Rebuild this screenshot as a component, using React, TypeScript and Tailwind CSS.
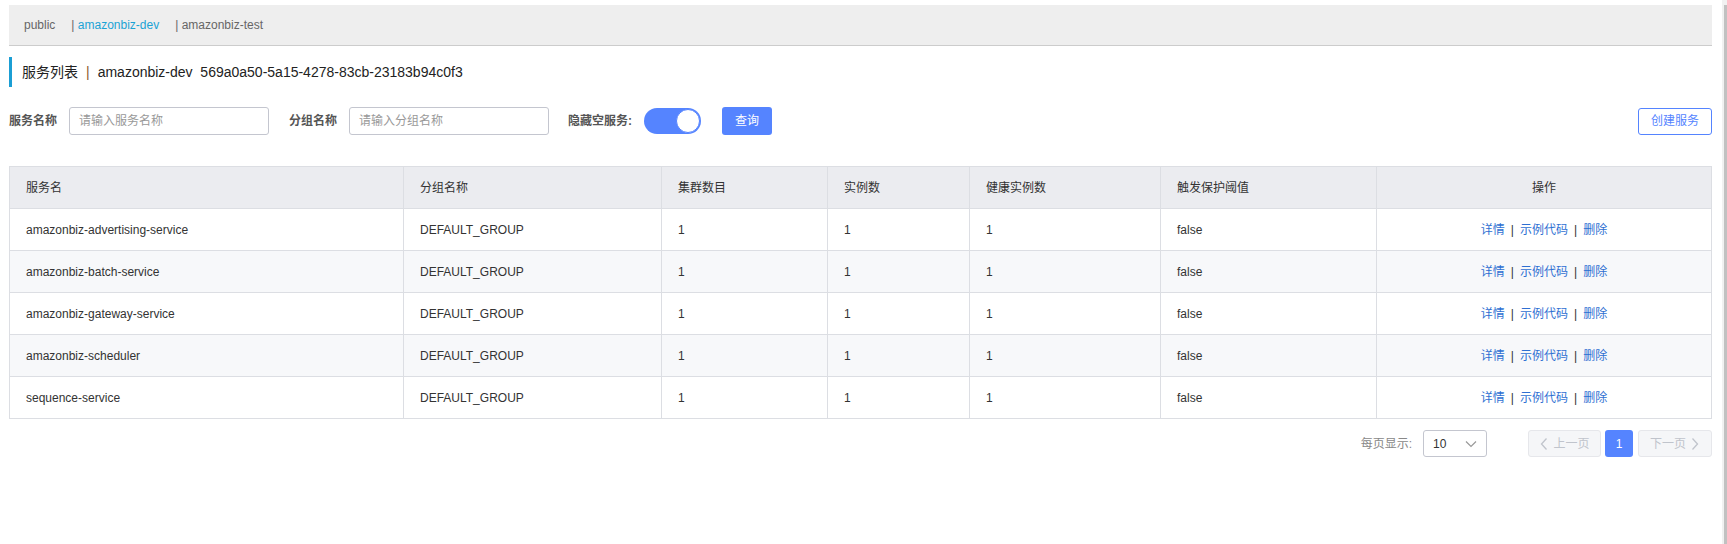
import { JSX } from 'react';

const rows = [
	'amazonbiz-advertising-service',
	'amazonbiz-batch-service',
	'amazonbiz-gateway-service',
	'amazonbiz-scheduler',
	'sequence-service',
];

const cols = [
	{ label: '服务名', w: 'w-[394px]' },
	{ label: '分组名称', w: 'w-[258px]' },
	{ label: '集群数目', w: 'w-[166px]' },
	{ label: '实例数', w: 'w-[142px]' },
	{ label: '健康实例数', w: 'w-[191px]' },
	{ label: '触发保护阈值', w: 'w-[216px]' },
];

const App = (): JSX.Element => {
	return (
		<div className="flex min-h-[544px] bg-white font-['Liberation_Sans','Noto_Sans_CJK_SC',sans-serif] text-[12px] text-[#333]">
			<div className="flex-1 pl-[9px] pr-[10px] pt-[5px]">
				{/* namespace tabs */}
				<div className="flex h-[41px] items-center border-b border-[#cccccc] bg-[#eeeeee] pl-[15px] text-[12px] text-[#666]">
					<span className="mr-[16px]">public</span>
					<span className="mr-[16px]">
						| <span className="text-[#1ba3d5]">amazonbiz-dev</span>
					</span>
					<span>| amazonbiz-test</span>
				</div>

				{/* title */}
				<div className="mt-[11px] flex h-[30px] items-center border-l-[3px] border-[#1b9ed4] pl-[10px] text-[14px] text-[#222]">
					<span>服务列表</span>
					<span className="mx-[8px] text-[#8b5a2b]">|</span>
					<span className="whitespace-pre">amazonbiz-dev  569a0a50-5a15-4278-83cb-23183b94c0f3</span>
				</div>

				{/* filters */}
				<div className="mt-[20px] flex h-[28px] items-center">
					<span className="font-bold text-[#555]">服务名称</span>
					<div className="ml-[12px] flex h-[28px] w-[200px] items-center rounded-[3px] border border-[#c4c6cf] pl-[9px] text-[#999]">
						请输入服务名称
					</div>
					<span className="ml-[20px] font-bold text-[#555]">分组名称</span>
					<div className="ml-[12px] flex h-[28px] w-[200px] items-center rounded-[3px] border border-[#c4c6cf] pl-[9px] text-[#999]">
						请输入分组名称
					</div>
					<span className="ml-[19px] font-bold text-[#555]">隐藏空服务:</span>
					<div className="ml-[12px] flex h-[26px] w-[57px] items-center justify-end rounded-full bg-[#5584ff] pr-[1px]">
						<div className="h-[24px] w-[24px] rounded-full border border-[#5584ff] bg-white" />
					</div>
					<button className="ml-[21px] h-[28px] w-[50px] rounded-[3px] bg-[#5584ff] text-white">
						查询
					</button>
					<div className="flex-1" />
					<button className="h-[27px] w-[74px] rounded-[3px] border border-[#5584ff] bg-white text-[#5584ff]">
						创建服务
					</button>
				</div>

				{/* table */}
				<table className="mt-[31px] w-full table-fixed border-collapse border border-[#dcdee3]">
					<thead>
						<tr className="h-[42px] bg-[#ebecf0]">
							{cols.map((c) => (
								<th
									key={c.label}
									className={`${c.w} border border-[#dcdee3] pl-[16px] text-left font-normal`}
								>
									{c.label}
								</th>
							))}
							<th className="border border-[#dcdee3] text-center font-normal">操作</th>
						</tr>
					</thead>
					<tbody>
						{rows.map((name, i) => (
							<tr key={name} className={i % 2 === 1 ? 'h-[42px] bg-[#f7f8fa]' : 'h-[42px] bg-white'}>
								<td className="border border-[#dcdee3] pl-[16px]">{name}</td>
								<td className="border border-[#dcdee3] pl-[16px]">DEFAULT_GROUP</td>
								<td className="border border-[#dcdee3] pl-[16px]">1</td>
								<td className="border border-[#dcdee3] pl-[16px]">1</td>
								<td className="border border-[#dcdee3] pl-[16px]">1</td>
								<td className="border border-[#dcdee3] pl-[16px]">false</td>
								<td className="border border-[#dcdee3] text-center">
									<span className="text-[#2e6fd2]">详情</span>
									<span className="mx-[6px]">|</span>
									<span className="text-[#2e6fd2]">示例代码</span>
									<span className="mx-[6px]">|</span>
									<span className="text-[#2e6fd2]">删除</span>
								</td>
							</tr>
						))}
					</tbody>
				</table>

				{/* pagination */}
				<div className="mt-[11px] flex h-[27px] items-center justify-end">
					<span className="text-[#888]">每页显示:</span>
					<div className="ml-[11px] flex h-[27px] w-[64px] items-center justify-between rounded-[3px] border border-[#c4c6cf] pl-[9px] pr-[8px] text-[#333]">
						<span>10</span>
						<svg width="14" height="14" viewBox="0 0 14 14" fill="none" stroke="#999" strokeWidth="1.2">
							<path d="M2 4.5 L7 9.5 L12 4.5" />
						</svg>
					</div>
					<div className="ml-[41px] flex h-[27px] w-[73px] items-center justify-center gap-[4px] rounded-[3px] border border-[#e6e7eb] bg-[#f5f6f8] text-[#c0c4cc]">
						<svg width="10" height="14" viewBox="0 0 10 14" fill="none" stroke="#c0c4cc" strokeWidth="1.3">
							<path d="M7.5 1.5 L2.5 7 L7.5 12.5" />
						</svg>
						<span>上一页</span>
					</div>
					<div className="ml-[4px] flex h-[27px] w-[28px] items-center justify-center rounded-[3px] bg-[#5584ff] text-white">
						1
					</div>
					<div className="ml-[5px] flex h-[27px] w-[74px] items-center justify-center gap-[4px] rounded-[3px] border border-[#e6e7eb] bg-[#f5f6f8] text-[#c0c4cc]">
						<span>下一页</span>
						<svg width="10" height="14" viewBox="0 0 10 14" fill="none" stroke="#c0c4cc" strokeWidth="1.3">
							<path d="M2.5 1.5 L7.5 7 L2.5 12.5" />
						</svg>
					</div>
				</div>
			</div>
			{/* page scrollbar */}
			<div className="flex w-[5px] flex-col bg-[#f1f1f1]">
				<div className="mt-[5px] ml-[2px] flex-1 bg-[#c1c1c1]" />
			</div>
		</div>
	);
};

export default App;
